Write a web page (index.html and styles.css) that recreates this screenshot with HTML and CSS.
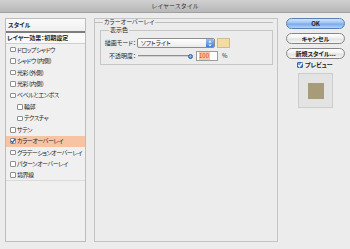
FILE: index.html
```html
<!DOCTYPE html>
<html lang="ja">
<head>
<meta charset="utf-8">
<title>レイヤースタイル</title>
<link rel="stylesheet" href="styles.css">
</head>
<body>
<div class="titlebar">レイヤースタイル</div>
<div class="content">
  <div class="sidebar">
    <div class="side-hdr">スタイル</div>
    <div class="side-fx">レイヤー効果：初期設定</div>
    <ul class="fx-list">
      <li class="fx"><span class="cb"></span><span>ドロップシャドウ</span></li>
      <li class="fx"><span class="cb"></span><span>シャドウ (内側)</span></li>
      <li class="fx"><span class="cb"></span><span>光彩 (外側)</span></li>
      <li class="fx"><span class="cb"></span><span>光彩 (内側)</span></li>
      <li class="fx"><span class="cb"></span><span>ベベルとエンボス</span></li>
      <li class="fx sub"><span class="cb"></span><span>輪郭</span></li>
      <li class="fx sub"><span class="cb"></span><span>テクスチャ</span></li>
      <li class="fx"><span class="cb"></span><span>サテン</span></li>
      <li class="fx active"><span class="cb checked"><svg viewBox="0 0 6 6" width="6" height="6"><path d="M1.2 3 L2.5 4.6 L5.2 0.8" fill="none" stroke="#2a5cb8" stroke-width="1.3"/></svg></span><span>カラーオーバーレイ</span></li>
      <li class="fx"><span class="cb"></span><span>グラデーションオーバーレイ</span></li>
      <li class="fx"><span class="cb"></span><span>パターンオーバーレイ</span></li>
      <li class="fx last"><span class="cb"></span><span>境界線</span></li>
    </ul>
  </div>
  <div class="main">
    <fieldset class="grp">
      <legend>カラーオーバーレイ</legend>
      <fieldset class="sub-grp">
        <legend>表示色</legend>
        <div class="row">
          <span class="lbl">描画モード：</span>
          <div class="select"><span>ソフトライト</span><span class="stepper"><svg viewBox="0 0 8 10" width="8" height="9"><path d="M2.2 4 L4 1.8 L5.8 4 Z M2.2 6 L4 8.2 L5.8 6 Z" fill="#fff"/></svg></span></div>
          <span class="swatch"></span>
        </div>
        <div class="row">
          <span class="lbl">不透明度：</span>
          <div class="slider"><span class="track"></span><span class="thumb"></span></div>
          <div class="num"><span class="sel">100</span></div>
          <span class="pct">%</span>
        </div>
      </fieldset>
    </fieldset>
  </div>
  <div class="actions">
    <button class="btn primary">OK</button>
    <button class="btn">キャンセル</button>
    <button class="btn">新規スタイル...</button>
    <div class="preview-row"><span class="cb checked blue"><svg viewBox="0 0 6 6" width="6" height="6"><path d="M1.2 3 L2.5 4.6 L5.2 0.8" fill="none" stroke="#fff" stroke-width="1.3"/></svg></span><span>プレビュー</span></div>
    <div class="preview"><span class="preview-swatch"></span></div>
  </div>
</div>
</body>
</html>
```
FILE: styles.css
```css
* { box-sizing: border-box; }
html, body { margin: 0; padding: 0; }
body {
  width: 350px;
  height: 249px;
  overflow: hidden;
  background: #ececec;
  font-family: "Noto Sans CJK JP", "Noto Sans", sans-serif;
  font-size: 6px;
  line-height: 1;
  color: #1e1e1e;
  white-space: nowrap;
  font-feature-settings: "palt";
}
.titlebar {
  height: 13px;
  background: linear-gradient(#d0d0d0, #b8b8b8);
  border-bottom: 1px solid #a0a0a0;
  display: flex;
  align-items: center;
  justify-content: center;
  color: #2e2e2e;
  font-size: 6px;
  font-feature-settings: normal;
}
.content {
  display: flex;
  gap: 8px;
  padding: 5px 5px 0 5px;
}
.sidebar {
  width: 81px;
  height: 224px;
  border: 1px solid #bcbcbc;
  background: #f0f0f0;
  display: flex;
  flex-direction: column;
}
.side-hdr {
  height: 14px;
  display: flex;
  align-items: center;
  padding-left: 2px;
  font-weight: bold;
  background: linear-gradient(#fbfbfb, #efefef);
  border-bottom: 2px solid #7d7d7d;
}
.side-fx {
  height: 11px;
  display: flex;
  align-items: center;
  padding-left: 1px;
  font-weight: bold;
  background: #f9f9f9;
  border-bottom: 1px solid #cfcfcf;
}
.fx-list {
  margin: 0;
  padding: 0;
  list-style: none;
}
.fx {
  height: 11.45px;
  display: flex;
  align-items: center;
  gap: 1.5px;
  padding-left: 4px;
  letter-spacing: -0.45px;
}
.fx.sub { padding-left: 11px; }
.fx.active { background: #f8c3a3; }
.fx.last { border-bottom: 1px solid #dadada; }
.cb {
  width: 5.5px;
  height: 5.5px;
  flex: none;
  border: 1px solid #8e8e8e;
  border-radius: 1px;
  background: #fff;
  display: flex;
  align-items: center;
  justify-content: center;
  overflow: visible;
}
.cb svg { flex: none; }
.cb.blue {
  width: 6px;
  height: 6px;
  background: linear-gradient(#7fb0ee, #2f6fd0);
  border-color: #3a62a8;
}
.main {
  width: 184px;
  height: 224px;
  border: 1px solid #c4c4c4;
  padding: 0 4px 0 0;
}
fieldset {
  margin: 0;
  min-width: 0;
}
legend {
  line-height: 6px;
  padding: 0 1px;
  font-size: 6px;
}
.grp {
  border: none;
  border-top: 1px solid #bdbdbd;
  padding: 1px 0 0 5px;
}
.grp > legend { margin-left: 3px; }
.sub-grp {
  margin-top: 1px;
  border: 1px solid #c6c6c6;
  padding: 5px 0 3px 0;
}
.sub-grp > legend { margin-left: 8px; }
.row {
  display: flex;
  align-items: center;
  height: 10px;
}
.row + .row { margin-top: 3px; }
.lbl {
  width: 35px;
  text-align: right;
  flex: none;
}
.select {
  width: 78px;
  height: 10px;
  margin-left: 1px;
  border: 1px solid #8d8d8d;
  border-radius: 2px;
  background: linear-gradient(#ffffff, #ebebeb);
  display: flex;
  align-items: center;
  justify-content: space-between;
  padding-left: 3px;
  overflow: hidden;
}
.stepper {
  width: 8px;
  height: 100%;
  background: linear-gradient(#9cc2f4, #3f80dc);
  display: flex;
  align-items: center;
  justify-content: center;
}
.swatch {
  width: 13px;
  height: 10px;
  margin-left: 2px;
  background: #f4dba2;
  border: 1px solid #cdbb93;
}
.slider {
  width: 55px;
  margin-left: 2px;
  display: flex;
  align-items: center;
}
.track {
  flex: 1;
  height: 2px;
  background: #8f8f8f;
  border-bottom: 1px solid #d0d0d0;
}
.thumb {
  width: 5px;
  height: 5px;
  margin-left: -3px;
  border-radius: 50%;
  background: radial-gradient(circle at 40% 35%, #9cc6f6, #3a7ad6);
  border: 0.5px solid #2f5fa8;
}
.num {
  width: 22px;
  height: 10px;
  margin-left: 3px;
  border: 1px solid #9c9c9c;
  background: #fff;
  display: flex;
  align-items: center;
  padding-left: 1.5px;
}
.sel {
  background: #fbc4ab;
  color: #d6421e;
  padding: 1px 0.5px;
}
.pct { margin-left: 4px; }
.actions {
  width: 59px;
  display: flex;
  flex-direction: column;
}
.btn {
  height: 11px;
  padding: 0;
  margin: 0;
  border: 1px solid #858585;
  border-radius: 6px;
  background: linear-gradient(#ffffff, #f1f1f1 45%, #e2e2e2 55%, #f6f6f6);
  font-family: inherit;
  font-size: 6px;
  font-weight: bold;
  line-height: 1;
  color: #1a1a1a;
  display: flex;
  align-items: center;
  justify-content: center;
  font-feature-settings: "palt";
}
.btn + .btn { margin-top: 4px; }
.btn.primary {
  border-color: #5a7fb3;
  background: linear-gradient(#d3e5fa, #9cc2f2 45%, #78aaec 55%, #b4d5f8);
}
.preview-row {
  margin-top: 2px;
  height: 7px;
  display: flex;
  align-items: center;
  gap: 2px;
  padding-left: 11px;
  font-weight: bold;
}
.preview {
  width: 35px;
  height: 35px;
  margin: 5px 0 0 12px;
  background: #e3e3e3;
  border: 1px solid #cdcdcd;
  display: flex;
  align-items: center;
  justify-content: center;
}
.preview-swatch {
  width: 16px;
  height: 16px;
  background: #a89b78;
}
```
